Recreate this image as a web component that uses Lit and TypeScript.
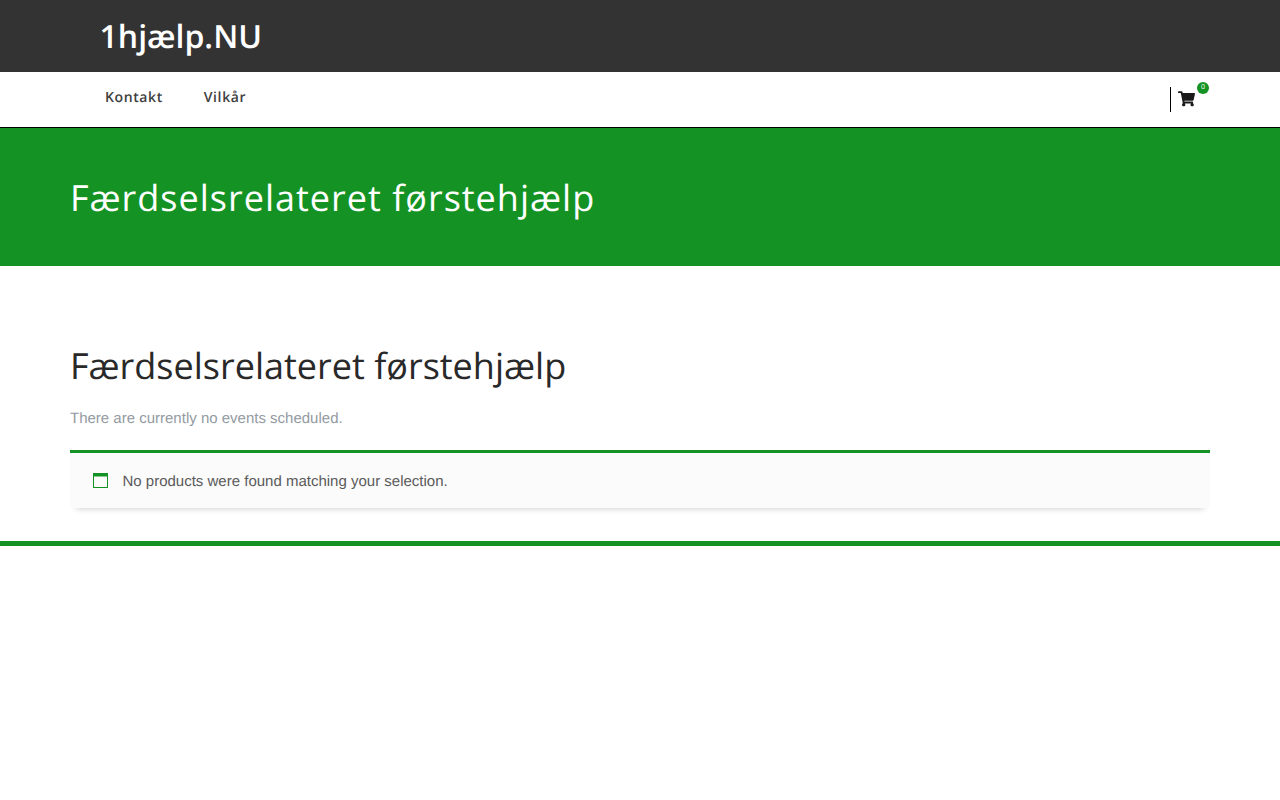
import { LitElement, html, css } from "lit";
import { customElement } from "lit/decorators.js";

@customElement("app-root")
export class AppRoot extends LitElement {
  static styles = css`
    :host { display: block; min-height: 800px; background: #fff; font-family: "Open Sans", sans-serif; text-rendering: geometricPrecision; }
    .top { height: 72px; background: #333; display: flex; align-items: center; padding-left: 99.5px; }
    .logo { color: #fff; font-size: 32px; font-weight: 600; line-height: 72px; padding-top: 2px; height: 72px; }
    .nav { height: 55px; background: #fff; border-bottom: 1px solid #000; display: flex; align-items: flex-start; padding: 0 70px 0 85px; justify-content: space-between; }
    .links { display: flex; gap: 1px; padding-top: 16px; }
    .links a { color: #404040; font-size: 14px; font-weight: 600; letter-spacing: 0.6px; line-height: 20px; padding: 0 20px; }
    .cart { position: relative; margin-top: 15px; width: 40px; height: 25px; border-left: 1px solid #000; box-sizing: border-box; }
    .cart svg { position: absolute; left: 7px; top: 4px; width: 17px; height: 15.5px; fill: #1a1a1a; }
    .badge { position: absolute; left: 26px; top: -5px; width: 12px; height: 12px; border-radius: 50%; background: #149324; color: #fff; font-size: 7px; line-height: 12px; text-align: center; }
    .hero { height: 138px; background: #149324; box-sizing: border-box; padding: 45px 70px 0; }
    .hero h1 { margin: 0; color: #fff; font-size: 36px; font-weight: 400; letter-spacing: 1px; line-height: 50px; }
    .main { padding: 75px 70px 33px; }
    h2 { margin: 0; color: #292929; font-size: 36px; font-weight: 400; line-height: 50px; }
    .none { margin: 16px 0 0; color: #939aa2; font-family: "Liberation Sans", sans-serif; font-size: 15px; line-height: 24px; }
    .info { margin-top: 19px; height: 58px; box-sizing: border-box; border-top: 3px solid #149324; background: #fbfbfb; display: flex; align-items: center; padding-left: 23px; gap: 14.5px; color: #5a5a5a; font-family: "Liberation Sans", sans-serif; font-size: 15px; position: relative; box-shadow: 0 7px 6px -6px rgba(0,0,0,.18); }
    .info span { padding-top: 2px; }
    .info svg { width: 15px; height: 15px; flex: none; }
    .bar { height: 5px; background: #149324; }
  `;
  render() {
    return html`
      <div class="top"><div class="logo">1hjælp.NU</div></div>
      <div class="nav">
        <div class="links"><a>Kontakt</a><a>Vilkår</a></div>
        <div class="cart">
          <svg viewBox="0 0 576 512"><path d="M528 301l47-208c3-15-8-29-23-29H159l-9-45C148 8 138 0 126 0H24C11 0 0 11 0 24v16c0 13 11 24 24 24h70l70 343c-17 10-28 28-28 49 0 31 25 56 56 56s56-25 56-56c0-16-6-30-17-40h210c-11 10-17 24-17 40 0 31 25 56 56 56s56-25 56-56c0-22-13-41-32-50l6-24c3-15-8-29-23-29H220l-7-32h292c11 0 21-8 23-19z"/></svg>
          <span class="badge">0</span>
        </div>
      </div>
      <div class="hero"><h1>Færdselsrelateret førstehjælp</h1></div>
      <div class="main">
        <h2>Færdselsrelateret førstehjælp</h2>
        <p class="none">There are currently no events scheduled.</p>
        <div class="info">
          <svg viewBox="0 0 15 15"><rect x=".5" y=".5" width="14" height="14" fill="#fbfbfb" stroke="#149324"/><rect width="15" height="3.5" fill="#149324"/></svg>
          <span>No products were found matching your selection.</span>
        </div>
      </div>
      <div class="bar"></div>
    `;
  }
}
